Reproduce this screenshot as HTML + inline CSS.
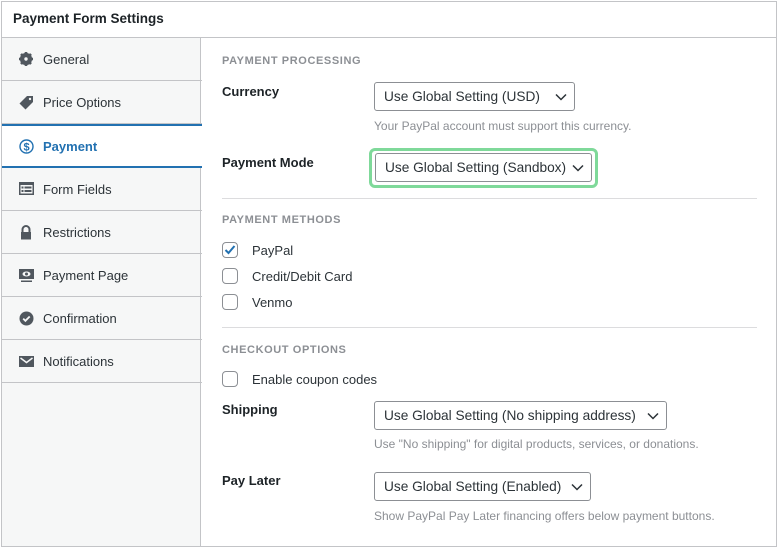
<!DOCTYPE html>
<html><head><meta charset="utf-8"><style>
*{margin:0;padding:0;box-sizing:border-box}
body{width:778px;height:548px;background:#fff;font-family:"Liberation Sans",sans-serif;color:#1d2327;position:relative;overflow:hidden}
.a{position:absolute;white-space:nowrap}
.frame{position:absolute;left:1px;top:1px;width:776px;height:546px;border:1px solid #c3c4c7}
.hdr{left:13px;top:11px;font-size:13.5px;font-weight:bold}
.hline{position:absolute;left:1px;top:37px;width:776px;height:1px;background:#c3c4c7}
.side{position:absolute;left:2px;top:38px;width:199px;height:508px;background:#f6f7f7;border-right:1px solid #c3c4c7}
.item{position:absolute;left:2px;width:200px;height:43px;border-bottom:1px solid #c3c4c7;font-size:13px;color:#2c3338}
.item span{position:absolute;left:41px;top:14px}
.item svg{position:absolute;left:17px;top:14px}
.act{background:#fff;border-top:2px solid #2271b1;border-bottom:2px solid #2271b1;color:#2271b1;font-weight:bold;width:200px}
.sec{font-size:11px;font-weight:bold;color:#8c8f94;letter-spacing:.6px;left:222px}
.lbl{font-size:13px;font-weight:bold;color:#1d2327;left:222px}
.sel{position:absolute;height:29px;border:1px solid #8c8f94;border-radius:3px;font-size:13.7px;padding:6px 0 0 9px;color:#2c3338;background:#fff;white-space:nowrap}
.sel svg{position:absolute;right:7px;top:10px}
.help{font-size:12px;color:#8c8f94;left:374px}
.sep{position:absolute;left:222px;width:535px;height:1px;background:#dcdcde}
.cb{position:absolute;left:222px;width:16px;height:16px;border:1px solid #8c8f94;border-radius:4px;background:#fff}
.cl{left:252px;font-size:13px;color:#2c3338}
</style></head><body>
<div class="frame"></div>
<div class="a hdr">Payment Form Settings</div>
<div class="hline"></div>
<div class="side"></div>
<div class="item" style="top:38px"><svg width="14" height="14" viewBox="0 0 14 14"><circle cx="7" cy="7" r="4.6" fill="none" stroke="#50575e" stroke-width="3"/><g stroke="#50575e" stroke-width="2.6"><line x1="7" y1="0" x2="7" y2="14"/><line x1="0" y1="7" x2="14" y2="7"/><line x1="2" y1="2" x2="12" y2="12"/><line x1="12" y1="2" x2="2" y2="12"/></g><circle cx="7" cy="7" r="1.7" fill="#f6f7f7"/></svg><span>General</span></div>
<div class="item" style="top:81px"><svg width="15" height="15" viewBox="0 0 15 15"><path d="M8 1h6v6l-7.5 7.5-6-6z" fill="#50575e"/><circle cx="11" cy="4" r="1.2" fill="#f6f7f7"/></svg><span>Price Options</span></div>
<div class="item act" style="top:124px;height:44px"><svg width="15" height="15" viewBox="0 0 15 15" style="top:13px"><circle cx="7.5" cy="7.5" r="6.5" fill="none" stroke="#2271b1" stroke-width="1.4"/><text x="7.5" y="11.5" font-size="11" text-anchor="middle" fill="#2271b1" font-family="Liberation Sans">$</text></svg><span style="top:13px">Payment</span></div>
<div class="item" style="top:168px;height:43px"><svg width="15" height="13" viewBox="0 0 15 13"><rect x="0" y="0" width="15" height="13" fill="#50575e"/><rect x="1.5" y="3" width="12" height="8.5" fill="#f6f7f7"/><rect x="2.5" y="4.5" width="2" height="2" fill="#50575e"/><rect x="2.5" y="8" width="2" height="2" fill="#50575e"/><rect x="5.5" y="4.5" width="7" height="2" fill="#50575e"/><rect x="5.5" y="8" width="7" height="2" fill="#50575e"/></svg><span>Form Fields</span></div>
<div class="item" style="top:211px"><svg width="14" height="15" viewBox="0 0 14 15"><path d="M3.5 7V4.5a3.5 3.5 0 0 1 7 0V7" fill="none" stroke="#50575e" stroke-width="2"/><rect x="2" y="7" width="10" height="7.5" fill="#50575e"/></svg><span>Restrictions</span></div>
<div class="item" style="top:254px"><svg width="15" height="15" viewBox="0 0 15 15"><rect x="0" y="1" width="15" height="10" fill="#50575e"/><ellipse cx="7.5" cy="6" rx="4" ry="2.5" fill="#f6f7f7"/><circle cx="7.5" cy="6" r="1.5" fill="#50575e"/><rect x="2" y="12.5" width="11" height="1.5" fill="#50575e"/></svg><span>Payment Page</span></div>
<div class="item" style="top:297px"><svg width="15" height="15" viewBox="0 0 15 15"><circle cx="7.5" cy="7.5" r="7" fill="#50575e"/><path d="M4.2 7.6l2.2 2.2 4.3-4.3" fill="none" stroke="#f6f7f7" stroke-width="1.8"/></svg><span>Confirmation</span></div>
<div class="item" style="top:340px"><svg width="15" height="12" viewBox="0 0 15 12" style="top:16px"><rect width="15" height="11" fill="#50575e"/><path d="M1.5 2l6 4.5 6-4.5" fill="none" stroke="#f6f7f7" stroke-width="1.5"/></svg><span>Notifications</span></div>

<div class="a sec" style="top:55px">PAYMENT PROCESSING</div>
<div class="a lbl" style="top:84px">Currency</div>
<div class="sel" style="left:374px;top:82px;width:201px">Use Global Setting (USD)<svg width="12" height="8" viewBox="0 0 12 8"><path d="M1 1.5l5 5 5-5" fill="none" stroke="#2c3338" stroke-width="1.5"/></svg></div>
<div class="a help" style="top:119px">Your PayPal account must support this currency.</div>
<div class="a lbl" style="top:155px">Payment Mode</div>
<div style="position:absolute;left:369px;top:148px;width:229px;height:40px;border:3px solid #7fd99a;border-radius:6px"></div>
<div class="sel" style="left:375px;top:153px;width:217px">Use Global Setting (Sandbox)<svg width="12" height="8" viewBox="0 0 12 8"><path d="M1 1.5l5 5 5-5" fill="none" stroke="#2c3338" stroke-width="1.5"/></svg></div>
<div class="sep" style="top:198px"></div>
<div class="a sec" style="top:214px">PAYMENT METHODS</div>
<div class="cb" style="top:242px"><svg width="14" height="14" viewBox="0 0 14 14" style="position:absolute;left:0;top:0"><path d="M2.5 7l3 3 6-7" fill="none" stroke="#2271b1" stroke-width="2"/></svg></div>
<div class="a cl" style="top:243px">PayPal</div>
<div class="cb" style="top:268px"></div>
<div class="a cl" style="top:269px">Credit/Debit Card</div>
<div class="cb" style="top:294px"></div>
<div class="a cl" style="top:295px">Venmo</div>
<div class="sep" style="top:327px"></div>
<div class="a sec" style="top:344px">CHECKOUT OPTIONS</div>
<div class="cb" style="top:371px"></div>
<div class="a cl" style="top:372px">Enable coupon codes</div>
<div class="a lbl" style="top:402px">Shipping</div>
<div class="sel" style="left:374px;top:401px;width:293px">Use Global Setting (No shipping address)<svg width="12" height="8" viewBox="0 0 12 8"><path d="M1 1.5l5 5 5-5" fill="none" stroke="#2c3338" stroke-width="1.5"/></svg></div>
<div class="a help" style="top:437px">Use "No shipping" for digital products, services, or donations.</div>
<div class="a lbl" style="top:473px">Pay Later</div>
<div class="sel" style="left:374px;top:472px;width:217px">Use Global Setting (Enabled)<svg width="12" height="8" viewBox="0 0 12 8"><path d="M1 1.5l5 5 5-5" fill="none" stroke="#2c3338" stroke-width="1.5"/></svg></div>
<div class="a help" style="top:509px">Show PayPal Pay Later financing offers below payment buttons.</div>
</body></html>
